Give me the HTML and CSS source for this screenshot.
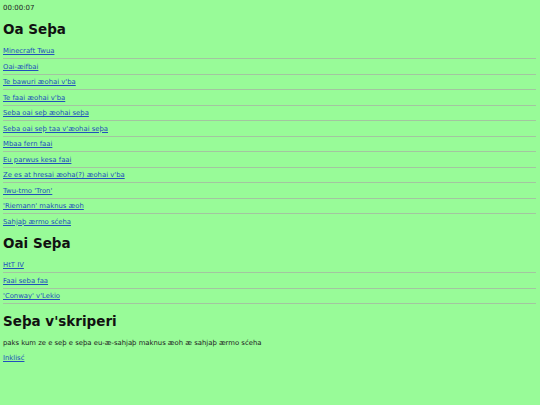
FILE: index.html
```html
<!DOCTYPE html>
<html>
<head>
<meta charset="utf-8">
<link rel="stylesheet" href="styles.css">
</head>
<body>
<div class="clock">00:00:07</div>
<h1 class="title title-first">Oa Seþa</h1>
<ul class="list list-first">
  <li><a href="#">Minecraft Twua</a></li>
  <li><a href="#">Oai-æifbai</a></li>
  <li><a href="#">Te bawuri æohai v'ba</a></li>
  <li><a href="#">Te faai æohai v'ba</a></li>
  <li><a href="#">Seba oai seþ æohai seþa</a></li>
  <li><a href="#">Seba oai seþ taa v'æohai seþa</a></li>
  <li><a href="#">Mbaa fern faai</a></li>
  <li><a href="#">Eu parwus kesa faai</a></li>
  <li><a href="#">Ze es at hresai æoha(?) æohai v'ba</a></li>
  <li><a href="#">Twu-tmo 'Tron'</a></li>
  <li><a href="#">'Riemann' maknus æoh</a></li>
  <li><a href="#">Sahjaþ ærmo sćeha</a></li>
</ul>
<h1 class="title title-second">Oai Seþa</h1>
<ul class="list list-second">
  <li><a href="#">HtT IV</a></li>
  <li><a href="#">Faai seba faa</a></li>
  <li><a href="#">'Conway' v'Lekio</a></li>
</ul>
<h1 class="title title-third">Seþa v'skriperi</h1>
<p class="text">paks kum ze e seþ e seþa eu-æ-sahjaþ maknus æoh æ sahjaþ ærmo sćeha</p>
<a class="plain-link" href="#">Inklisć</a>
</body>
</html>
```
FILE: styles.css
```css
html, body {
  margin: 0;
  padding: 0;
}
body {
  background: #98fb98;
  color: #222222;
  font-family: "DejaVu Sans", Verdana, sans-serif;
  font-size: 6.85px;
  padding: 4px 4px 0 3px;
}
.clock {
  font-size: 7px;
  line-height: 9px;
}
.title {
  font-size: 13.5px;
  font-weight: bold;
  line-height: 16px;
  color: #111111;
  margin: 0 0 6.5px 0;
}
.title-first {
  margin-top: 8px;
}
.title-second {
  margin-top: 6.5px;
}
.title-third {
  margin-top: 9px;
  margin-bottom: 0;
}
.list {
  list-style: none;
  margin: 0;
  padding: 0;
}
.list li {
  line-height: 10px;
  padding: 2.5px 0 2px 0;
  border-bottom: 1px solid #a3c5a0;
}
.list-first li:last-child {
  border-bottom: none;
}
a {
  color: #2150bd;
  text-decoration: underline;
}
.text {
  margin: 9.5px 0 6px 0;
  line-height: 9px;
}
.plain-link {
  display: inline-block;
  line-height: 9px;
}
```
